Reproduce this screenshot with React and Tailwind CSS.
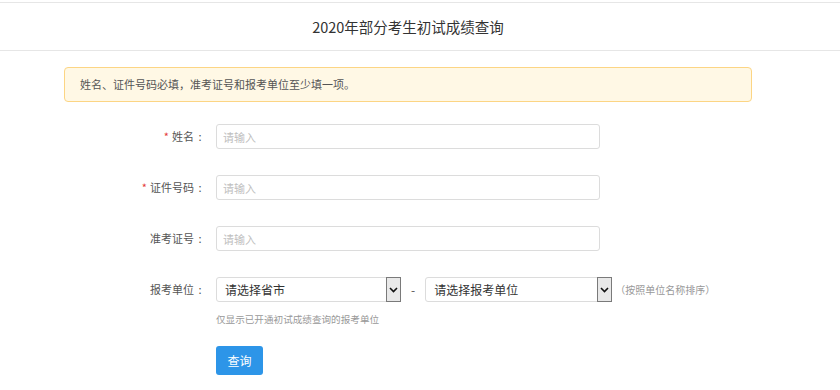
import React, { useState } from 'react';

const font = { fontFamily: '"Noto Sans CJK SC", "Noto Sans", sans-serif' };

const Field = ({ label, required, children }) => (
  <div className="flex items-center h-[25px]">
    <label className="w-[142px] flex justify-end items-center text-[11px] text-[#555]">
      {required && <span className="text-[#e4393c] mr-[3px]">*</span>}
      <span>{label}</span>
      <span className="w-[12px] text-center">:</span>
    </label>
    <div className="ml-[10px] flex items-center">{children}</div>
  </div>
);

const TextInput = () => (
  <input
    type="text"
    placeholder="请输入"
    className="w-[384px] h-[25px] border border-[#dcdcdc] rounded-[3px] px-[6px] text-[11px] text-[#333] placeholder:text-[#c0c0c0] outline-none"
  />
);

// native-looking select with grey arrow box on the right
const FakeSelect = ({ value, width }) => (
  <div
    className="flex items-center h-[25px] border border-[#dcdcdc] rounded-[3px] bg-white"
    style={{ width }}
  >
    <span className="flex-1 pl-[8px] text-[12px] text-[#333]">{value}</span>
    <span className="w-[15px] h-[25px] -my-px -mr-px border border-[#7a7a7a] bg-[#e9e9e9] flex items-center justify-center">
      <svg width="9" height="6" viewBox="0 0 9 6">
        <path d="M1 1 L4.5 4.5 L8 1" stroke="#111" strokeWidth="1.6" fill="none" />
      </svg>
    </span>
  </div>
);

export default function App() {
  const [loading] = useState(false);

  return (
    <div className="bg-white w-[840px] h-[390px] overflow-hidden" style={font}>
      {/* header */}
      <div className="pt-[2px]">
        <div className="border-t border-b border-[#e6e6e6] h-[49px] flex items-center">
          <div className="ml-[64px] w-[688px] text-center text-[14.5px] text-[#333]">
            2020年部分考生初试成绩查询
          </div>
        </div>
      </div>

      <div className="ml-[64px] w-[688px]">
        {/* notice */}
        <div className="mt-[16px] h-[35px] flex items-center px-[15px] bg-[#fff8e5] border border-[#fcd584] rounded-[4px] text-[11px] text-[#555]">
          姓名、证件号码必填，准考证号和报考单位至少填一项。
        </div>

        <div className="mt-[22px] flex flex-col gap-[26px]">
          <Field label="姓名" required>
            <TextInput />
          </Field>
          <Field label="证件号码" required>
            <TextInput />
          </Field>
          <Field label="准考证号">
            <TextInput />
          </Field>
          <Field label="报考单位">
            <FakeSelect value="请选择省市" width={185} />
            <span className="mx-[10px] text-[12px] text-[#555]">-</span>
            <FakeSelect value="请选择报考单位" width={187} />
            <span className="ml-[3px] text-[10px] text-[#999]">（按照单位名称排序）</span>
          </Field>
        </div>

        <div className="ml-[152px] mt-[10px] text-[9.6px] text-[#999]">
          仅显示已开通初试成绩查询的报考单位
        </div>

        <button
          className="ml-[152px] mt-[20px] w-[47px] h-[29px] rounded-[3px] bg-[#2d95e8] text-white text-[12px]"
          disabled={loading}
        >
          查询
        </button>
      </div>
    </div>
  );
}
